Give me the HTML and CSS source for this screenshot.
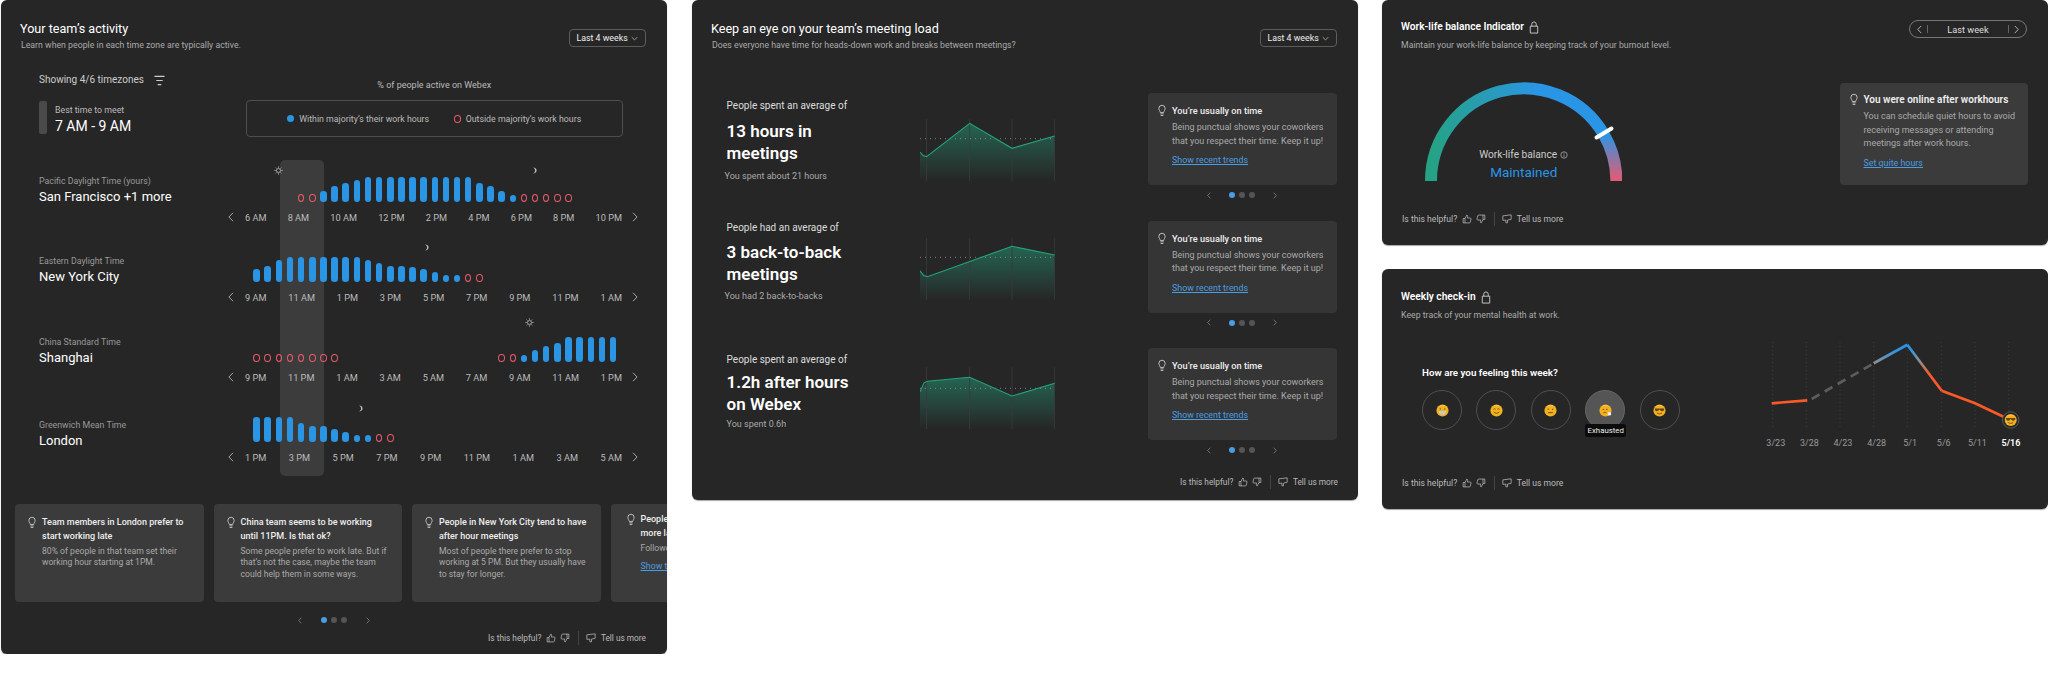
FILE: index.html
```html
<!DOCTYPE html>
<html lang="en">
<head>
	<meta charset="UTF-8">
	<title>Team insights</title>
	<link rel="stylesheet" href="styles.css">
</head>
<body>
	<!-- icons -->
	<svg class="sprite">
		<symbol id="i-bulb" viewBox="0 0 9 14"><path d="M2.600 9.200C2.400 7.600 1 7 1 4.600a3.500 3.500 0 0 1 7 0C8 7 6.600 7.600 6.400 9.200zM2.700 10.800h3.600M3 12.600h3" fill="none" stroke="currentColor"/></symbol>
		<symbol id="i-up" viewBox="0 0 12 12"><path d="M3.600 5.400 5.600 1.400c.9 0 1.400.6 1.200 1.500L6.400 4.800h3.400c.7 0 1.200.6 1 1.300l-.9 3.800c-.1.5-.5.8-1 .8H3.600zM3.600 5.400H1.400v5.300h2.200" fill="none" stroke="currentColor" stroke-width=".9"/></symbol>
		<symbol id="i-down" viewBox="0 0 12 12"><path d="M8.400 6.600 6.400 10.600c-.9 0-1.400-.6-1.200-1.500l.4-1.900H2.200c-.7 0-1.200-.6-1-1.300l.9-3.800c.1-.5.5-.8 1-.8h5.300zM8.400 6.600h2.200V1.300H8.400" fill="none" stroke="currentColor" stroke-width=".9"/></symbol>
		<symbol id="i-talk" viewBox="0 0 12 12"><path d="M1 2.200 11 1v5.400L6.800 7.200l-.5 3.600-1.800-.5.3-2.900L1 7.600z" fill="none" stroke="currentColor" stroke-width=".9" stroke-linejoin="round"/></symbol>
		<symbol id="i-lock" viewBox="0 0 10 14"><path d="M2.600 5.600V3.400a2.400 2.400 0 0 1 4.800 0v2.200M1 5.600h8v7.400H1z" fill="none" stroke="currentColor"/></symbol>
		<symbol id="i-left" viewBox="0 0 6 10"><path d="M5 .8.900 5 5 9.200" fill="none" stroke="currentColor"/></symbol>
		<symbol id="i-right" viewBox="0 0 6 10"><path d="M1 .8 5.100 5 1 9.200" fill="none" stroke="currentColor"/></symbol>
		<symbol id="i-sun" viewBox="0 0 10 10"><circle cx="5" cy="5" r="2.200" fill="none" stroke="currentColor" stroke-width=".9"/><path d="M5 .4v1.600M5 8v1.600M.4 5H2M8 5h1.600M1.800 1.800l1 1M7.200 7.200l1 1M8.200 1.800l-1 1M2.800 7.200l-1 1" stroke="currentColor" stroke-width=".9"/></symbol>
		<symbol id="i-moon" viewBox="0 0 8 10"><path d="M2.200 1.600C4.800 1.600 6.400 3.100 6.400 5S4.800 8.400 2.200 8.400C3.800 7.700 4.600 6.400 4.600 5S3.800 2.300 2.200 1.600z" fill="currentColor"/></symbol>
		<symbol id="i-grin" viewBox="0 0 12 12"><circle cx="6" cy="6" r="5.600" fill="#f2b11f"/><path d="M2.600 2.400a5 5 0 0 1 6.800 0 8 8 0 0 0-6.800 0z" fill="#f6d98a"/><path d="M2.400 6.400h7.200C9.400 9 7.800 10 6 10S2.600 9 2.400 6.400z" fill="#c9c9c9"/><path d="M3.400 4.600h1.200M7.400 4.600h1.200" stroke="#5c3a10" stroke-width=".8"/></symbol>
		<symbol id="i-smile" viewBox="0 0 12 12"><circle cx="6" cy="6" r="5.600" fill="#f2b11f"/><path d="M2.600 2.400a5 5 0 0 1 6.800 0 8 8 0 0 0-6.800 0z" fill="#f6d98a"/><path d="M3.200 5l1-.7 1 .7M6.800 5l1-.7 1 .7M3.400 7.200C4.600 9 7.400 9 8.600 7.200" fill="none" stroke="#5c3a10" stroke-width=".7"/></symbol>
		<symbol id="i-flat" viewBox="0 0 12 12"><circle cx="6" cy="6" r="5.600" fill="#f2b11f"/><path d="M2.600 2.400a5 5 0 0 1 6.800 0 8 8 0 0 0-6.800 0z" fill="#f6d98a"/><path d="M3.400 4.800h1.200M7.400 4.800h1.200M3.800 8h4.400" stroke="#5c3a10" stroke-width=".8"/></symbol>
		<symbol id="i-tired" viewBox="0 0 12 12"><circle cx="6" cy="6" r="5.600" fill="#f2b11f"/><path d="M2.600 2.400a5 5 0 0 1 6.800 0 8 8 0 0 0-6.800 0z" fill="#f6d98a"/><path d="M3.200 5h1.600M6.400 5H8M4 8.400c1-1 2-1 3 0" fill="none" stroke="#5c3a10" stroke-width=".7"/><circle cx="9.600" cy="9" r="1.700" fill="#eee"/></symbol>
		<symbol id="i-cool" viewBox="0 0 12 12"><circle cx="6" cy="6" r="5.600" fill="#f2b11f"/><path d="M2.600 2.400a5 5 0 0 1 6.800 0 8 8 0 0 0-6.800 0z" fill="#f6d98a"/><path d="M1.600 4.200h8.800l-.4 1.800c-.6 1-2.600 1-3.200 0l-.4-.8h-.8l-.4.800c-.6 1-2.600 1-3.200 0z" fill="#6b4412"/><path d="M3.600 8.200c1.400 1.200 3.400 1.200 4.800 0" fill="none" stroke="#5c3a10" stroke-width=".7"/></symbol>
	</svg>

	<div class="board">
		<!-- team activity -->
		<section class="panel panel-activity">
			<header class="panel-head">
				<div>
					<h2 class="panel-title">Your team’s activity</h2>
					<p class="panel-sub">Learn when people in each time zone are typically active.</p>
				</div>
				<div class="select">Last 4 weeks <svg class="select-arrow" viewBox="0 0 10 6"><path d="M1 1l4 4 4-4" fill="none" stroke="currentColor"/></svg></div>
			</header>

			<div class="summary">
				<div class="summary-left">
					<div class="showing">Showing 4/6 timezones
						<svg class="filter" viewBox="0 0 12 12"><path d="M.5 1.500h11M2.500 6h7M4 10.500h4" stroke="currentColor" stroke-width="1.200"/></svg>
					</div>
					<div class="best">
						<span class="best-bar"></span>
						<div>
							<div class="best-label">Best time to meet</div>
							<div class="best-time">7 AM - 9 AM</div>
						</div>
					</div>
				</div>
				<div class="summary-right">
					<div class="legend-title">% of people active on Webex</div>
					<div class="legend">
						<span class="legend-item"><i class="dot-in"></i>Within majority’s their work hours</span>
						<span class="legend-item"><i class="off"></i>Outside majority’s work hours</span>
					</div>
				</div>
			</div>

			<div class="chart">
				<div class="highlight"></div>

				<div class="tz">
					<div class="tz-name"><div class="tz-zone">Pacific Daylight Time (yours)</div><div class="tz-city">San Francisco +1 more</div></div>
					<div class="track">
						<svg class="mark mark-sun" style="left:23px;top:3px"><use href="#i-sun"/></svg>
						<svg class="mark mark-moon" style="left:280px;top:3px"><use href="#i-moon"/></svg>
						<div class="bars">
							<i class="off" style="grid-column-start:5"></i><i class="off"></i>
							<i class="bar" style="height:11px"></i><i class="bar" style="height:16px"></i><i class="bar" style="height:19px"></i><i class="bar" style="height:22px"></i>
							<i class="bar" style="height:25px"></i><i class="bar" style="height:25px"></i><i class="bar" style="height:25px"></i><i class="bar" style="height:25px"></i><i class="bar" style="height:25px"></i>
							<i class="bar" style="height:25px"></i><i class="bar" style="height:25px"></i><i class="bar" style="height:25px"></i><i class="bar" style="height:25px"></i><i class="bar" style="height:25px"></i>
							<i class="bar" style="height:19px"></i><i class="bar" style="height:16px"></i><i class="bar" style="height:11px"></i><i class="bar" style="height:7px"></i>
							<i class="off"></i><i class="off"></i><i class="off"></i><i class="off"></i><i class="off"></i>
						</div>
						<div class="axis">
							<svg class="axis-arrow"><use href="#i-left"/></svg>
							<div class="axis-labels"><span>6 AM</span><span>8 AM</span><span>10 AM</span><span>12 PM</span><span>2 PM</span><span>4 PM</span><span>6 PM</span><span>8 PM</span><span>10 PM</span></div>
							<svg class="axis-arrow"><use href="#i-right"/></svg>
						</div>
					</div>
				</div>

				<div class="tz">
					<div class="tz-name"><div class="tz-zone">Eastern Daylight Time</div><div class="tz-city">New York City</div></div>
					<div class="track">
						<svg class="mark mark-moon" style="left:172px;top:0"><use href="#i-moon"/></svg>
						<div class="bars">
							<i class="bar" style="height:13px"></i><i class="bar" style="height:16px"></i><i class="bar" style="height:22px"></i>
							<i class="bar" style="height:25px"></i><i class="bar" style="height:25px"></i><i class="bar" style="height:25px"></i><i class="bar" style="height:25px"></i><i class="bar" style="height:25px"></i><i class="bar" style="height:25px"></i><i class="bar" style="height:25px"></i>
							<i class="bar" style="height:22px"></i><i class="bar" style="height:19px"></i><i class="bar" style="height:16px"></i><i class="bar" style="height:16px"></i><i class="bar" style="height:15px"></i><i class="bar" style="height:13px"></i><i class="bar" style="height:10px"></i>
							<i class="bar" style="height:7px"></i><i class="bar" style="height:7px"></i>
							<i class="off"></i><i class="off"></i>
						</div>
						<div class="axis">
							<svg class="axis-arrow"><use href="#i-left"/></svg>
							<div class="axis-labels"><span>9 AM</span><span>11 AM</span><span>1 PM</span><span>3 PM</span><span>5 PM</span><span>7 PM</span><span>9 PM</span><span>11 PM</span><span>1 AM</span></div>
							<svg class="axis-arrow"><use href="#i-right"/></svg>
						</div>
					</div>
				</div>

				<div class="tz tz-shanghai">
					<div class="tz-name"><div class="tz-zone">China Standard Time</div><div class="tz-city">Shanghai</div></div>
					<div class="track">
						<svg class="mark mark-sun" style="left:274px;top:-5px"><use href="#i-sun"/></svg>
						<div class="bars">
							<i class="off"></i><i class="off"></i><i class="off"></i><i class="off"></i><i class="off"></i><i class="off"></i><i class="off"></i><i class="off"></i>
							<i class="off" style="grid-column-start:23"></i><i class="off"></i>
							<i class="bar" style="height:7px"></i><i class="bar" style="height:12px"></i><i class="bar" style="height:16px"></i><i class="bar" style="height:19px"></i>
							<i class="bar" style="height:25px"></i><i class="bar" style="height:25px"></i><i class="bar" style="height:25px"></i><i class="bar" style="height:25px"></i><i class="bar" style="height:25px"></i>
						</div>
						<div class="axis">
							<svg class="axis-arrow"><use href="#i-left"/></svg>
							<div class="axis-labels"><span>9 PM</span><span>11 PM</span><span>1 AM</span><span>3 AM</span><span>5 AM</span><span>7 AM</span><span>9 AM</span><span>11 AM</span><span>1 PM</span></div>
							<svg class="axis-arrow"><use href="#i-right"/></svg>
						</div>
					</div>
				</div>

				<div class="tz tz-london">
					<div class="tz-name"><div class="tz-zone">Greenwich Mean Time</div><div class="tz-city">London</div></div>
					<div class="track">
						<svg class="mark mark-moon" style="left:106px;top:1px"><use href="#i-moon"/></svg>
						<div class="bars">
							<i class="bar" style="height:25px"></i><i class="bar" style="height:25px"></i><i class="bar" style="height:25px"></i><i class="bar" style="height:25px"></i>
							<i class="bar" style="height:19px"></i><i class="bar" style="height:16px"></i><i class="bar" style="height:16px"></i><i class="bar" style="height:13px"></i><i class="bar" style="height:10px"></i>
							<i class="bar" style="height:7px"></i><i class="bar" style="height:7px"></i>
							<i class="off"></i><i class="off"></i>
						</div>
						<div class="axis">
							<svg class="axis-arrow"><use href="#i-left"/></svg>
							<div class="axis-labels"><span>1 PM</span><span>3 PM</span><span>5 PM</span><span>7 PM</span><span>9 PM</span><span>11 PM</span><span>1 AM</span><span>3 AM</span><span>5 AM</span></div>
							<svg class="axis-arrow"><use href="#i-right"/></svg>
						</div>
					</div>
				</div>
			</div>

			<div class="tips">
				<div class="card tip">
					<svg class="bulb"><use href="#i-bulb"/></svg>
					<div>
						<h3 class="tip-title">Team members in London prefer to start working late</h3>
						<p class="tip-text">80% of people in that team set their working hour starting at 1PM.</p>
					</div>
				</div>
				<div class="card tip">
					<svg class="bulb"><use href="#i-bulb"/></svg>
					<div>
						<h3 class="tip-title">China team seems to be working until 11PM. Is that ok?</h3>
						<p class="tip-text">Some people prefer to work late. But if that’s not the case, maybe the team could help them in some ways.</p>
					</div>
				</div>
				<div class="card tip">
					<svg class="bulb"><use href="#i-bulb"/></svg>
					<div>
						<h3 class="tip-title">People in New York City tend to have after hour meetings</h3>
						<p class="tip-text">Most of people there prefer to stop working at 5 PM. But they usually have to stay for longer.</p>
					</div>
				</div>
				<div class="card tip tip-cut">
					<svg class="bulb"><use href="#i-bulb"/></svg>
					<div>
						<h3 class="tip-title">People in London have<br>more late meetings</h3>
						<p class="tip-text">Followed by other teams.</p>
						<a class="link" href="#">Show trends</a>
					</div>
				</div>
			</div>

			<div class="pager">
				<svg class="pager-arrow"><use href="#i-left"/></svg>
				<i class="cur"></i><i></i><i></i>
				<svg class="pager-arrow"><use href="#i-right"/></svg>
			</div>

			<div class="feedback">
				<span>Is this helpful?</span>
				<svg class="fb-icon"><use href="#i-up"/></svg>
				<svg class="fb-icon"><use href="#i-down"/></svg>
				<b class="fb-line"></b>
				<svg class="fb-icon"><use href="#i-talk"/></svg>
				<span>Tell us more</span>
			</div>
		</section>

		<!-- meeting load -->
		<section class="panel panel-load">
			<header class="panel-head">
				<div>
					<h2 class="panel-title">Keep an eye on your team’s meeting load</h2>
					<p class="panel-sub">Does everyone have time for heads-down work and breaks between meetings?</p>
				</div>
				<div class="select">Last 4 weeks <svg class="select-arrow" viewBox="0 0 10 6"><path d="M1 1l4 4 4-4" fill="none" stroke="currentColor"/></svg></div>
			</header>

			<div class="load load-1">
				<div class="load-copy">
					<p class="load-lead">People spent an average of</p>
					<p class="load-big">13 hours in meetings</p>
					<p class="load-note">You spent about 21 hours</p>
				</div>
				<svg class="area" viewBox="0 0 135 62">
					<defs>
						<linearGradient id="fade" x1="0" y1="0" x2="0" y2="1">
							<stop offset="0" stop-color="#23a37c" stop-opacity=".5"/>
							<stop offset="1" stop-color="#23a37c" stop-opacity="0"/>
						</linearGradient>
					</defs>
					<path d="M0 33 6.600 37.700 49.700 4.300 92 29.300 134.700 17V62H0z" fill="url(#fade)"/>
					<path class="area-grid" d="M6.500 0v62M49.600 0v62M92 0v62M134.600 0v62"/>
					<path class="area-avg" d="M0 19.700H135"/>
					<path class="area-line" d="M0 33 3 36.500 6.600 37.700 49.700 4.300 92 29.300 134.700 17"/>
				</svg>
				<div class="load-side">
					<div class="card note">
						<svg class="bulb"><use href="#i-bulb"/></svg>
						<div>
							<h3 class="note-title">You’re usually on time</h3>
							<p class="note-text">Being punctual shows your coworkers that you respect their time. Keep it up!</p>
							<a class="link" href="#">Show recent trends</a>
						</div>
					</div>
					<div class="pager">
						<svg class="pager-arrow"><use href="#i-left"/></svg>
						<i class="cur"></i><i></i><i></i>
						<svg class="pager-arrow"><use href="#i-right"/></svg>
					</div>
				</div>
			</div>

			<div class="load load-2">
				<div class="load-copy">
					<p class="load-lead">People had an average of</p>
					<p class="load-big">3 back-to-back meetings</p>
					<p class="load-note">You had 2 back-to-backs</p>
				</div>
				<svg class="area" viewBox="0 0 135 62">
					<path d="M0 32.700 7.500 38.700 92 8.300 134.700 17V62H0z" fill="url(#fade)"/>
					<path class="area-grid" d="M6.500 0v62M49.600 0v62M92 0v62M134.600 0v62"/>
					<path class="area-avg" d="M0 19.300H135"/>
					<path class="area-line" d="M0 32.700 3.500 37.500 7.500 38.700 92 8.300 134.700 17"/>
				</svg>
				<div class="load-side">
					<div class="card note">
						<svg class="bulb"><use href="#i-bulb"/></svg>
						<div>
							<h3 class="note-title">You’re usually on time</h3>
							<p class="note-text">Being punctual shows your coworkers that you respect their time. Keep it up!</p>
							<a class="link" href="#">Show recent trends</a>
						</div>
					</div>
					<div class="pager">
						<svg class="pager-arrow"><use href="#i-left"/></svg>
						<i class="cur"></i><i></i><i></i>
						<svg class="pager-arrow"><use href="#i-right"/></svg>
					</div>
				</div>
			</div>

			<div class="load load-3">
				<div class="load-copy">
					<p class="load-lead">People spent an average of</p>
					<p class="load-big">1.2h after hours on Webex</p>
					<p class="load-note">You spent 0.6h</p>
				</div>
				<svg class="area" viewBox="0 0 135 62">
					<path d="M0 24.700 7.500 14.300 49.700 10.300 92 29 134.700 16.300V62H0z" fill="url(#fade)"/>
					<path class="area-grid" d="M6.500 0v62M49.600 0v62M92 0v62M134.600 0v62"/>
					<path class="area-avg" d="M0 21.300H135"/>
					<path class="area-line" d="M0 24.700 4 16 7.500 14.300 49.700 10.300 92 29 134.700 16.300"/>
				</svg>
				<div class="load-side">
					<div class="card note">
						<svg class="bulb"><use href="#i-bulb"/></svg>
						<div>
							<h3 class="note-title">You’re usually on time</h3>
							<p class="note-text">Being punctual shows your coworkers that you respect their time. Keep it up!</p>
							<a class="link" href="#">Show recent trends</a>
						</div>
					</div>
					<div class="pager">
						<svg class="pager-arrow"><use href="#i-left"/></svg>
						<i class="cur"></i><i></i><i></i>
						<svg class="pager-arrow"><use href="#i-right"/></svg>
					</div>
				</div>
			</div>

			<div class="feedback">
				<span>Is this helpful?</span>
				<svg class="fb-icon"><use href="#i-up"/></svg>
				<svg class="fb-icon"><use href="#i-down"/></svg>
				<b class="fb-line"></b>
				<svg class="fb-icon"><use href="#i-talk"/></svg>
				<span>Tell us more</span>
			</div>
		</section>

		<div class="side">
			<!-- work-life balance -->
			<section class="panel panel-balance">
				<header class="panel-head">
					<div>
						<h2 class="panel-title panel-title-small">Work-life balance Indicator <svg class="lock"><use href="#i-lock"/></svg></h2>
						<p class="panel-sub">Maintain your work-life balance by keeping track of your burnout level.</p>
					</div>
					<div class="range">
						<svg class="range-arrow"><use href="#i-left"/></svg>
						<b class="range-line"></b>
						<span class="range-text">Last week</span>
						<b class="range-line"></b>
						<svg class="range-arrow"><use href="#i-right"/></svg>
					</div>
				</header>
				<div class="balance">
					<div class="gauge">
						<svg class="gauge-arc" viewBox="0 0 197.400 99">
							<defs>
								<linearGradient id="arc-a" gradientUnits="userSpaceOnUse" x1="0" y1="0" x2="150" y2="0">
									<stop offset="0" stop-color="#25a37f"/>
									<stop offset=".75" stop-color="#2a95e5"/>
								</linearGradient>
								<linearGradient id="arc-b" gradientUnits="userSpaceOnUse" x1="0" y1="52" x2="0" y2="99">
									<stop offset="0" stop-color="#2a95e5"/>
									<stop offset="1" stop-color="#e85a70"/>
								</linearGradient>
							</defs>
							<path d="M6 99A92.700 92.700 0 0 1 178.600 52" fill="none" stroke="url(#arc-a)" stroke-width="12"/>
							<path d="M178.600 52A92.700 92.700 0 0 1 191.400 99" fill="none" stroke="url(#arc-b)" stroke-width="12"/>
							<path d="M171.500 55.500 186.500 46.500" stroke="#fff" stroke-width="4" stroke-linecap="round"/>
						</svg>
						<div class="gauge-text">
							<div class="gauge-label">Work-life balance <svg class="info" viewBox="0 0 10 10"><circle cx="5" cy="5" r="4" fill="none" stroke="currentColor" stroke-width=".8"/><path d="M5 4.400v3M5 2.600v.9" stroke="currentColor" stroke-width=".8"/></svg></div>
							<div class="gauge-value">Maintained</div>
						</div>
					</div>
					<div class="card note note-wide">
						<svg class="bulb"><use href="#i-bulb"/></svg>
						<div>
							<h3 class="note-title">You were online after workhours</h3>
							<p class="note-text">You can schedule quiet hours to avoid receiving messages or attending meetings after work hours.</p>
							<a class="link" href="#">Set quite hours</a>
						</div>
					</div>
				</div>
				<div class="feedback feedback-left">
					<span>Is this helpful?</span>
					<svg class="fb-icon"><use href="#i-up"/></svg>
					<svg class="fb-icon"><use href="#i-down"/></svg>
					<b class="fb-line"></b>
					<svg class="fb-icon"><use href="#i-talk"/></svg>
					<span>Tell us more</span>
				</div>
			</section>

			<!-- weekly check-in -->
			<section class="panel panel-checkin">
				<header class="panel-head">
					<div>
						<h2 class="panel-title panel-title-small">Weekly check-in <svg class="lock"><use href="#i-lock"/></svg></h2>
						<p class="panel-sub">Keep track of your mental health at work.</p>
					</div>
				</header>
				<div class="checkin">
					<div class="mood">
						<h3 class="mood-title">How are you feeling this week?</h3>
						<div class="moods">
							<span class="face"><svg><use href="#i-grin"/></svg></span>
							<span class="face"><svg><use href="#i-smile"/></svg></span>
							<span class="face"><svg><use href="#i-flat"/></svg></span>
							<span class="face face-on"><svg><use href="#i-tired"/></svg><span class="tooltip">Exhausted</span></span>
							<span class="face"><svg><use href="#i-cool"/></svg></span>
						</div>
					</div>
					<div class="trend">
						<svg class="trend-plot" viewBox="0 0 298 102">
							<defs>
								<linearGradient id="t-up" gradientUnits="userSpaceOnUse" x1="124" y1="33" x2="157" y2="15">
									<stop offset="0" stop-color="#8f8f8f"/>
									<stop offset=".7" stop-color="#2a95e5"/>
								</linearGradient>
								<linearGradient id="t-down" gradientUnits="userSpaceOnUse" x1="157" y1="15" x2="192" y2="61">
									<stop offset=".1" stop-color="#2a95e5"/>
									<stop offset=".35" stop-color="#8f8f8f"/>
									<stop offset=".65" stop-color="#fa5a28"/>
								</linearGradient>
							</defs>
							<path class="trend-grid" d="M22.700 12v87M56.300 12v87M90 12v87M123.700 12v87M157.300 12v87M191.300 12v87M225 12v87M258.700 12v87"/>
							<path class="trend-orange" d="M21.700 73.300 57.300 70.300"/>
							<path class="trend-dash" d="M61.700 69 123.700 33.300"/>
							<path class="trend-stroke" stroke="url(#t-up)" d="M123.700 33.300 157.300 14.700"/>
							<path class="trend-stroke" stroke="url(#t-down)" d="M157.300 14.700 191.700 60.700"/>
							<path class="trend-orange" d="M191.700 60.700 225 73.300 256.700 88.300"/>
							<circle cx="260.700" cy="90" r="8.200" fill="#262626" stroke="#5a5a5a"/>
							<use href="#i-cool" x="254.200" y="83.500" width="13" height="13"/>
						</svg>
						<div class="trend-dates"><span>3/23</span><span>3/28</span><span>4/23</span><span>4/28</span><span>5/1</span><span>5/6</span><span>5/11</span><span class="now">5/16</span></div>
					</div>
				</div>
				<div class="feedback feedback-left">
					<span>Is this helpful?</span>
					<svg class="fb-icon"><use href="#i-up"/></svg>
					<svg class="fb-icon"><use href="#i-down"/></svg>
					<b class="fb-line"></b>
					<svg class="fb-icon"><use href="#i-talk"/></svg>
					<span>Tell us more</span>
				</div>
			</section>
		</div>
	</div>
</body>
</html>
```

FILE: styles.css
```css
body,h2,h3,p{
	margin:0;
	padding:0;
}
body{
	background:#fff;
	font-family:Roboto,"Liberation Sans",sans-serif;
	color:#ddd;
	overflow:hidden;
}
.sprite{
	display:none;
}
.board{
	display:flex;
	align-items:flex-start;
	padding-left:1px;
}
.panel{
	position:relative;
	width:666px;
	flex:none;
	background:#262626;
	border-radius:6px;
	box-shadow:0 1px 1px rgba(0,0,0,.35);
	overflow:hidden;
}
.panel-activity{height:654px;}
.panel-load{height:500px;margin-left:25px;}
.side{margin-left:24px;width:666px;}
.panel-balance{height:245px;}
.panel-checkin{height:240px;margin-top:24px;}

/* header */
.panel-head{
	display:flex;
	justify-content:space-between;
	align-items:flex-start;
	padding:20px 21px 0 19px;
}
.panel-title{
	font-size:12.6px;
	line-height:18px;
	font-weight:400;
	color:#fff;
}
.panel-title-small{
	display:flex;
	align-items:center;
	gap:5px;
	font-size:10.2px;
	font-weight:600;
	line-height:16px;
}
.panel-balance .panel-title-small{margin-top:-1px;}
.panel-sub{
	font-size:8.75px;
	line-height:14px;
	color:#aaa;
	margin-left:1px;
}
.panel-balance .panel-sub,.panel-checkin .panel-sub{
	margin:3px 0 0;
}
.select{
	display:flex;
	align-items:center;
	justify-content:space-between;
	box-sizing:border-box;
	width:77.5px;
	height:18px;
	margin-top:9px;
	padding:0 7px;
	border:1px solid #5c5c5c;
	border-radius:4px;
	font-size:8.8px;
	white-space:nowrap;
	color:#eee;
}
.select-arrow{width:7px;height:5px;flex:none;color:#ccc;}
.lock{width:10px;height:13px;color:#ccc;}
.range{
	display:flex;
	align-items:center;
	box-sizing:border-box;
	width:118px;
	height:18px;
	padding:0 7px;
	border:1px solid #777;
	border-radius:9px;
}
.range-arrow{width:5px;height:9px;color:#ccc;}
.range-line{width:1px;height:8px;background:#666;margin:0 5px;}
.range-text{flex:1;text-align:center;font-size:9.2px;color:#ddd;}

/* activity */
.summary{
	display:flex;
	margin-top:20px;
	padding-left:38px;
}
.summary-left{width:206.5px;}
.showing{
	display:flex;
	align-items:center;
	gap:10px;
	font-size:10px;
	line-height:16px;
	color:#ccc;
}
.filter{width:11px;height:11px;color:#ccc;}
.best{
	display:flex;
	gap:8px;
	margin-top:13px;
}
.best-bar{width:8px;height:33px;border-radius:2px;background:#4a4a4a;}
.best-label{font-size:8.8px;line-height:13px;margin-top:3px;color:#bbb;}
.best-time{font-size:14px;line-height:17px;margin-top:1px;color:#fff;}
.summary-right{width:377.5px;padding-top:6px;}
.legend-title{font-size:9px;line-height:14px;text-align:center;color:#bbb;}
.legend{
	display:flex;
	justify-content:center;
	align-items:center;
	gap:25px;
	box-sizing:border-box;
	height:37px;
	margin-top:8px;
	border:1px solid #4d4d4d;
	border-radius:4px;
}
.legend-item{display:flex;align-items:center;gap:5px;font-size:8.8px;color:#bbb;}
.dot-in{width:7px;height:7px;border-radius:50%;background:#2a95e5;}

.chart{position:relative;margin-top:26px;}
.highlight{
	position:absolute;
	left:279px;
	top:-3px;
	width:44px;
	height:316px;
	background:#3c3c3c;
	border-radius:5px;
}
.tz{
	position:relative;
	display:flex;
	height:80px;
	padding-left:38px;
}
.tz-name{width:212px;padding-top:11px;}
.tz-shanghai .tz-name{padding-top:12px;}
.tz-london .tz-name{padding-top:15px;}
.tz-zone{font-size:8.8px;line-height:14px;color:#999;}
.tz-city{font-size:13px;line-height:18px;color:#fff;}
.track{position:relative;width:387px;}
.mark{position:absolute;color:#bbb;}
.mark-sun{width:9px;height:9px;}
.mark-moon{width:7px;height:9px;}
.bars{
	display:grid;
	grid-template-columns:repeat(33,11.15px);
	align-items:end;
	justify-items:center;
	height:39px;
}
.bar{width:6.5px;border-radius:3.25px;background:#2a95e5;}
.off{
	display:block;
	box-sizing:border-box;
	width:6.5px;
	height:8px;
	border:1.2px solid #e8596a;
	border-radius:50%;
}
.axis{
	display:flex;
	align-items:center;
	height:14px;
	margin:8px 0 0 -25px;
	font-size:9.2px;
	color:#bbb;
}
.axis-arrow{width:6px;height:10px;flex:none;color:#aaa;margin-left:2px;}
.axis-labels{
	display:flex;
	justify-content:space-between;
	flex:1;
	margin:0 8px 0 11px;
}

/* cards */
.card{
	display:flex;
	box-sizing:border-box;
	background:#3b3b3b;
	border-radius:4px;
}
.bulb{width:8px;height:13px;flex:none;color:#ccc;}
.tips{
	display:flex;
	gap:10px;
	margin-top:21px;
	padding-left:14px;
}
.tip{
	flex:none;
	width:188.5px;
	height:98px;
	padding:12px 12px 0 13px;
	gap:6px;
}
.tip-cut{padding-top:9px;padding-left:16px;}
.tip-title{font-size:9px;line-height:13.5px;font-weight:500;color:#eee;}
.tip-text{font-size:8.6px;line-height:11.3px;margin-top:3px;color:#aaa;}
.link{display:block;font-size:8.9px;line-height:14px;color:#4a9de0;text-decoration:underline;}
.tip .link{margin-top:5px;}

.pager{
	display:flex;
	justify-content:center;
	align-items:center;
	height:10px;
	margin-top:13px;
}
.pager i{width:6px;height:6px;margin:0 2px;border-radius:50%;background:#555;}
.pager .cur{background:#4a9de0;}
.pager-arrow{width:4px;height:7px;margin:0 17px;color:#999;}

.feedback{
	display:flex;
	justify-content:flex-end;
	align-items:center;
	height:14px;
	margin-top:6px;
	padding-right:21px;
	font-size:8.3px;
	color:#bbb;
	gap:4.5px;
}
.fb-icon{width:10px;height:10px;color:#bbb;}
.fb-line{width:1px;height:14px;background:#444;margin:0 3px;}

/* meeting load */
.load{
	display:flex;
	height:127.5px;
	padding-left:34.6px;
}
.load-1{margin-top:41px;}
.load-copy{width:193.4px;box-sizing:border-box;}
.load-1 .load-copy{padding-top:6px;}
.load-2 .load-copy{padding-top:.5px;}
.load-3 .load-copy{padding-top:5px;}
.load-lead{font-size:10px;line-height:14px;color:#ddd;}
.load-big{
	width:125px;
	margin:6.5px 0 4.5px;
	font-size:17px;
	font-weight:600;
	line-height:22.5px;
	color:#fff;
}
.load-2 .load-big{margin:5.5px 0 3.5px;}
.load-3 .load-big{margin:3.5px 0 1.5px;}
.load-note{font-size:9px;line-height:14px;color:#aaa;margin-left:-2px;}
.load-3 .load-note{margin-left:0;}
.area{width:135px;height:62px;flex:none;margin-right:93px;}
.load-1 .area{margin-top:26px;}
.load-2 .area{margin-top:17.5px;}
.load-3 .area{margin-top:19px;}
.area-grid{fill:none;stroke:#3b3b3b;stroke-width:.8;}
.area-avg{fill:none;stroke:#9a9a9a;stroke-width:.8;stroke-dasharray:1 4;}
.area-line{fill:none;stroke:#23a37c;stroke-width:1.1;}
.load-side{width:189px;flex:none;}
.note{
	height:92px;
	padding:11px 10px 0 10px;
	gap:6px;
}
.note-title{font-size:9.2px;line-height:14px;font-weight:500;color:#eee;}
.note-text{font-size:9px;line-height:13.5px;margin-top:3px;color:#aaa;}
.note .link{margin-top:5px;}
.load-side .pager{margin-top:5px;}
.load-side .pager-arrow{margin:0 16px;}
.load-side .card{background:#353535;}
.panel-load .feedback{margin-top:-1px;padding-right:20px;}

/* balance */
.balance{
	display:flex;
	justify-content:space-between;
	padding:0 20px 0 43px;
	margin-top:30px;
	align-items:flex-start;
}
.gauge{position:relative;width:197.4px;height:99px;}
.gauge-arc{display:block;width:197.4px;height:99px;}
.gauge-text{
	position:absolute;
	left:0;
	right:0;
	bottom:-1px;
	text-align:center;
}
.gauge-label{
	display:flex;
	justify-content:center;
	align-items:center;
	gap:3px;
	font-size:10.2px;
	line-height:14px;
	color:#ccc;
}
.info{width:8px;height:8px;color:#ccc;}
.gauge-value{font-size:13.5px;line-height:20px;color:#2a95e5;}
.note-wide{width:188.5px;height:102px;margin-top:1px;padding:10px 10px 0 10px;background:#3b3b3b;}
.note-wide .note-title{font-size:10px;font-weight:600;}
.feedback-left{
	justify-content:flex-start;
	padding:0 0 0 20px;
	margin-top:27px;
	font-size:8.6px;
}
.panel-checkin .feedback-left{margin-top:26px;}

/* check-in */
.checkin{
	display:flex;
	margin-top:8px;
	height:120px;
}
.mood{width:328px;margin-left:40px;padding-top:35px;}
.mood-title{font-size:9.8px;line-height:16px;font-weight:600;color:#fff;}
.moods{display:flex;gap:14.4px;margin-top:9px;}
.face{
	position:relative;
	display:flex;
	justify-content:center;
	align-items:center;
	box-sizing:border-box;
	width:40px;
	height:40px;
	border:1px solid #4f4f4f;
	border-radius:50%;
}
.face svg{width:13px;height:13px;}
.face-on{background:#555;border-color:#666;}
.tooltip{
	position:absolute;
	left:-1px;
	top:33px;
	width:41px;
	height:13px;
	background:#0c0c0c;
	border-radius:2px;
	font-size:7.8px;
	line-height:13px;
	text-align:center;
	color:#eee;
}
.trend{width:298px;}
.trend-plot{display:block;width:298px;height:102px;}
.trend-grid{fill:none;stroke:#3f3f3f;stroke-width:1;stroke-dasharray:1 3;}
.trend-orange{fill:none;stroke:#fa5a28;stroke-width:2.7;}
.trend-dash{fill:none;stroke:#5c5c5c;stroke-width:2.7;stroke-dasharray:9 6;}
.trend-stroke{fill:none;stroke-width:2.7;}
.trend-dates{
	display:grid;
	grid-template-columns:repeat(8,33.6px);
	justify-items:center;
	padding-left:9px;
	margin-top:4px;
	font-size:9px;
	line-height:14px;
	color:#999;
}
.trend-dates .now{color:#fff;font-weight:600;}
```
